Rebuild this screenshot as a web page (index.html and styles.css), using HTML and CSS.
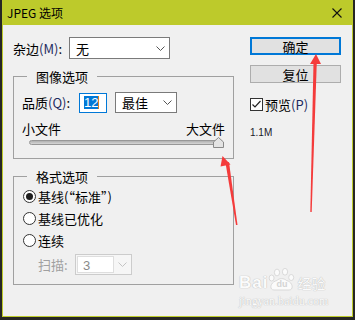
FILE: index.html
```html
<!DOCTYPE html>
<html lang="zh-CN">
<head>
<meta charset="UTF-8">
<meta name="viewport" content="width=device-width, initial-scale=1.0">
<title>JPEG 选项</title>
<link rel="stylesheet" href="styles.css">
</head>
<body>
<div class="window">
  <div class="titlebar">
    <span class="title">JPEG 选项</span>
    <svg class="close" width="10" height="10" viewBox="0 0 10 10"><path d="M0.5 0.5L9.5 9.5M9.5 0.5L0.5 9.5" stroke="#111" stroke-width="1.1"/></svg>
  </div>
  <div class="content">
    <div class="left">
      <div class="field matte">
        <span class="label">杂边<span class="key">(M)</span>:</span>
        <div class="select wide"><span>无</span><svg class="chev" width="9" height="5" viewBox="0 0 9 5"><path d="M0.5 0.5L4.5 4.5L8.5 0.5" fill="none" stroke="#555"/></svg></div>
      </div>

      <fieldset class="group">
        <legend>图像选项</legend>
        <div class="field quality">
          <span class="label">品质<span class="key">(Q)</span>:</span>
          <div class="spin"><span class="sel">12</span><span class="caret"></span></div>
          <div class="select level"><span>最佳</span><svg class="chev" width="9" height="5" viewBox="0 0 9 5"><path d="M0.5 0.5L4.5 4.5L8.5 0.5" fill="none" stroke="#555"/></svg></div>
        </div>
        <div class="size-labels"><span>小文件</span><span>大文件</span></div>
        <div class="slider">
          <div class="track"></div>
          <svg class="thumb" width="11" height="11" viewBox="0 0 11 11"><path d="M0.5 10.5V5L5.5 0.5L10.5 5V10.5Z" fill="#e4e4e4" stroke="#8a8a8a"/></svg>
        </div>
      </fieldset>

      <fieldset class="group format">
        <legend>格式选项</legend>
        <div class="radio on"><span class="dot"></span>基线(“标准”)</div>
        <div class="radio"><span class="dot"></span>基线已优化</div>
        <div class="radio"><span class="dot"></span>连续</div>
        <div class="field scan">
          <span class="label">扫描:</span>
          <div class="select disabled">
            <span class="value">3</span>
            <svg class="chev" width="9" height="5" viewBox="0 0 9 5"><path d="M0.5 0.5L4.5 4.5L8.5 0.5" fill="none" stroke="#c4c4c4"/></svg>
          </div>
        </div>
      </fieldset>
    </div>

    <div class="right">
      <button class="btn default">确定</button>
      <button class="btn">复位</button>
      <div class="check">
        <svg class="box" width="13" height="13" viewBox="0 0 13 13"><rect x="0.5" y="0.5" width="12" height="12" fill="#fff" stroke="#333"/><path d="M2.5 6.5L5 9L10.5 3" fill="none" stroke="#222" stroke-width="1.2"/></svg>
        <span>预览<span class="key">(P)</span></span>
      </div>
      <div class="filesize">1.1M</div>
    </div>
  </div>
</div>

<svg class="arrows" width="355" height="320" viewBox="0 0 355 320">
  <path d="M310.3 212L313.5 62L316.8 62L311.7 212Z" fill="#f43b3b"/>
  <path d="M316 54L321 64L310 64Z" fill="#f43b3b"/>
  <path d="M236 225L225.5 163L229 162L237.5 225Z" fill="#f43b3b"/>
  <path d="M222.5 156L230.5 164.5L220.5 166.5Z" fill="#f43b3b"/>
</svg>

<div class="watermark">
  <div class="wm-top">
    <span class="wm-bai">Bai</span>
    <span class="wm-paw">
      <svg width="28" height="23" viewBox="0 0 28 23"><g fill="#fbfbfb" stroke="#d2d2d2" stroke-width="0.8"><ellipse cx="9" cy="4.5" rx="2.6" ry="3.4"/><ellipse cx="17" cy="3.8" rx="2.6" ry="3.4"/><ellipse cx="3.6" cy="10" rx="2.5" ry="3"/><ellipse cx="23.2" cy="9.5" rx="2.5" ry="3"/><path d="M6 22C1 22 2 14 9 12.5C11 10 16 10 18.5 12.5C25 14 26 22 21 22Z"/></g></svg>
      <span class="wm-du">du</span>
    </span>
    <span class="wm-cn">经验</span>
  </div>
  <div class="wm-url">jingyan.baidu.com</div>
</div>
</body>
</html>
```

FILE: styles.css
```css
* {
  box-sizing: border-box;
}
body {
  margin: 0;
  height: 320px;
  overflow: hidden;
  position: relative;
  background: #262624;
  font-family: "Noto Sans CJK SC", "Liberation Sans", sans-serif;
  font-size: 13px;
  line-height: 17px;
  color: #000;
}
.window {
  margin-left: 2px;
  width: 351px;
  height: 317px;
  background: #f0f0f0;
  border: 1px solid #bdca2b;
  border-top: 0;
}
.titlebar {
  height: 25px;
  margin: 0 -1px;
  padding: 0 11px 0 5px;
  background: #bdca2b;
  display: flex;
  align-items: center;
  justify-content: space-between;
}
.title {
  font-size: 12px;
}
.content {
  display: flex;
  padding: 12px 0 0 10px;
}
.left {
  width: 221px;
}
.right {
  width: 91px;
  margin-left: 16px;
}
.key {
  color: #1c2a5e;
}
.field {
  display: flex;
  align-items: center;
}
.matte {
  height: 22px;
}
.matte .label {
  width: 56px;
}
.select {
  height: 22px;
  border: 1px solid #7a7a7a;
  background: #fff;
  display: flex;
  align-items: center;
  justify-content: space-between;
  padding: 0 4px 0 6px;
}
.select.wide {
  width: 101px;
}
.chev {
  display: block;
}
.group {
  margin: 9px 0 0;
  padding: 0 8px 10px;
  border: 1px solid #a0a0a0;
  min-width: 0;
}
.group legend {
  margin-left: 5px;
  padding: 0 9px;
  line-height: 17px;
}
.quality {
  margin-top: 7px;
  height: 21px;
}
.quality .label {
  width: 57px;
}
.spin {
  width: 28px;
  height: 20px;
  border: 1px solid #0078d7;
  background: #fff;
  padding-left: 4px;
  display: flex;
  align-items: center;
}
.spin .sel {
  background: #0078d7;
  color: #fff;
  line-height: 13px;
  font-family: "Liberation Sans", sans-serif;
}
.caret {
  width: 1px;
  height: 13px;
  background: #d9801f;
}
.select.level {
  width: 62px;
  height: 21px;
  margin-left: 8px;
}
.size-labels {
  margin-top: 7px;
  display: flex;
  justify-content: space-between;
}
.slider {
  position: relative;
  height: 11px;
  padding: 0 2px 0 7px;
  display: flex;
  align-items: center;
}
.track {
  flex: 1;
  height: 5px;
  border: 1px solid #979797;
  border-radius: 3px;
  background: linear-gradient(#b0b0b0, #d6d6d6);
}
.thumb {
  position: absolute;
  right: 1px;
  top: 0;
}
.radio {
  height: 22px;
  display: flex;
  align-items: center;
}
.radio .dot {
  width: 13px;
  height: 13px;
  margin: 0 2px 0 1px;
  border: 1px solid #333;
  border-radius: 50%;
  background: #fff;
  display: flex;
  align-items: center;
  justify-content: center;
}
.radio.on .dot::after {
  content: "";
  width: 7px;
  height: 7px;
  border-radius: 50%;
  background: #1e1e1e;
}
.scan {
  margin-top: 3px;
  height: 20px;
  padding-left: 16px;
}
.scan .label {
  width: 37px;
  color: #a0a0a0;
}
.select.disabled {
  width: 57px;
  height: 21px;
  padding: 1px 4px 1px 1px;
  border-color: #cccccc;
  background: #f6f6f6;
}
.select.disabled .value {
  width: 37px;
  height: 100%;
  padding-left: 5px;
  border: 1px solid #dedede;
  background: #fff;
  color: #8a8a8a;
  font-family: "Liberation Sans", sans-serif;
  line-height: 17px;
}
.btn {
  display: block;
  width: 91px;
  height: 18px;
  padding: 0;
  background: #e1e1e1;
  border: 1px solid #adadad;
  font: 13px/15px "Noto Sans CJK SC", sans-serif;
  color: #000;
  text-align: center;
}
.btn.default {
  border: 2px solid #0078d7;
  line-height: 13px;
}
.btn + .btn {
  margin-top: 10px;
}
.check {
  margin-top: 14px;
  height: 14px;
  display: flex;
  align-items: center;
}
.check .box {
  display: block;
  margin-right: 2px;
}
.filesize {
  margin-top: 16px;
  font: 10px/12px "Liberation Sans", sans-serif;
  color: #1a1a2a;
}
.arrows {
  position: absolute;
  left: 0;
  top: 0;
  pointer-events: none;
}
.watermark {
  position: absolute;
  left: 239px;
  top: 267px;
  color: #fbfbfb;
  text-shadow: 0 0 1px #b8b8b8, 0 0 1px #c8c8c8;
  font-family: "Liberation Sans", sans-serif;
}
.wm-top {
  display: flex;
  align-items: flex-end;
  height: 24px;
}
.wm-bai {
  font-size: 17px;
  line-height: 17px;
  font-weight: bold;
  letter-spacing: 1px;
}
.wm-paw {
  position: relative;
  width: 28px;
  height: 23px;
}
.wm-paw svg {
  display: block;
}
.wm-du {
  position: absolute;
  left: 8px;
  top: 11px;
  font-size: 9px;
  line-height: 10px;
  font-weight: bold;
  color: #d4d4d4;
  text-shadow: none;
}
.wm-cn {
  font-family: "Noto Sans CJK SC", sans-serif;
  font-size: 14px;
  line-height: 16px;
  margin-left: 1px;
}
.wm-url {
  margin-top: 4px;
  font-family: "Liberation Serif", serif;
  font-size: 12px;
  line-height: 12px;
}
```
